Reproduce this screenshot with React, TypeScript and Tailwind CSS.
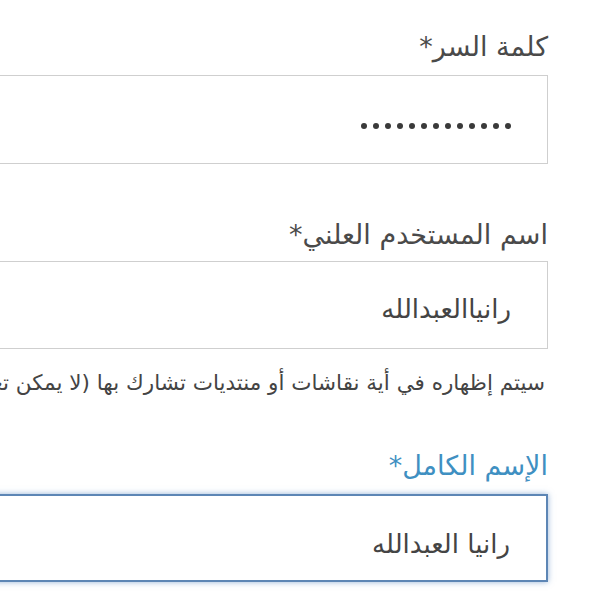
import React from "react";

export default function App() {
  const font = { fontFamily: '"DejaVu Sans", "Noto Sans", sans-serif' };
  const dots = Array.from({ length: 13 });
  return (
    <div className="w-[600px] h-[600px] overflow-hidden bg-white" style={font}>
      <div dir="rtl" className="flex flex-col items-start pr-[52px] pt-[29px]">
        <label className="text-[27px] leading-[36px] text-[#4a4a4a]">كلمة السر*</label>
        <div className="mt-[10px] w-[700px] h-[89px] border-[1.5px] border-[#cfcfcf] bg-white flex items-center pr-[36px] pt-[12px]">
          <div className="flex gap-[6px]">
            {dots.map((_, i) => (
              <span key={i} className="block w-[6px] h-[6px] rounded-full bg-[#3a3a3a]" />
            ))}
          </div>
        </div>

        <label className="mt-[53px] text-[27px] leading-[36px] text-[#4a4a4a]">اسم المستخدم العلني*</label>
        <div className="mt-[8px] w-[700px] h-[88px] border-[1.5px] border-[#cfcfcf] bg-white flex items-center pr-[36px] pt-[8px]">
          <span className="text-[26px] text-[#444]">رانياالعبدالله</span>
        </div>
        <p className="mt-[20px] text-[21.5px] leading-[28px] text-[#444] whitespace-nowrap pr-[3px]">
          سيتم إظهاره في أية نقاشات أو منتديات تشارك بها (لا يمكن تغييره لاحقاً)
        </p>

        <label className="mt-[51px] text-[27px] leading-[36px] text-[#3f90c2]">الإسم الكامل*</label>
        <div className="mt-[10px] w-[700px] h-[88px] border-2 border-[#5d86b5] bg-white flex items-center pr-[36px] pt-[12px] shadow-[0_0_6px_rgba(80,130,190,0.6)]">
          <span className="text-[26px] text-[#444]">رانيا العبدالله</span>
        </div>
      </div>
    </div>
  );
}
